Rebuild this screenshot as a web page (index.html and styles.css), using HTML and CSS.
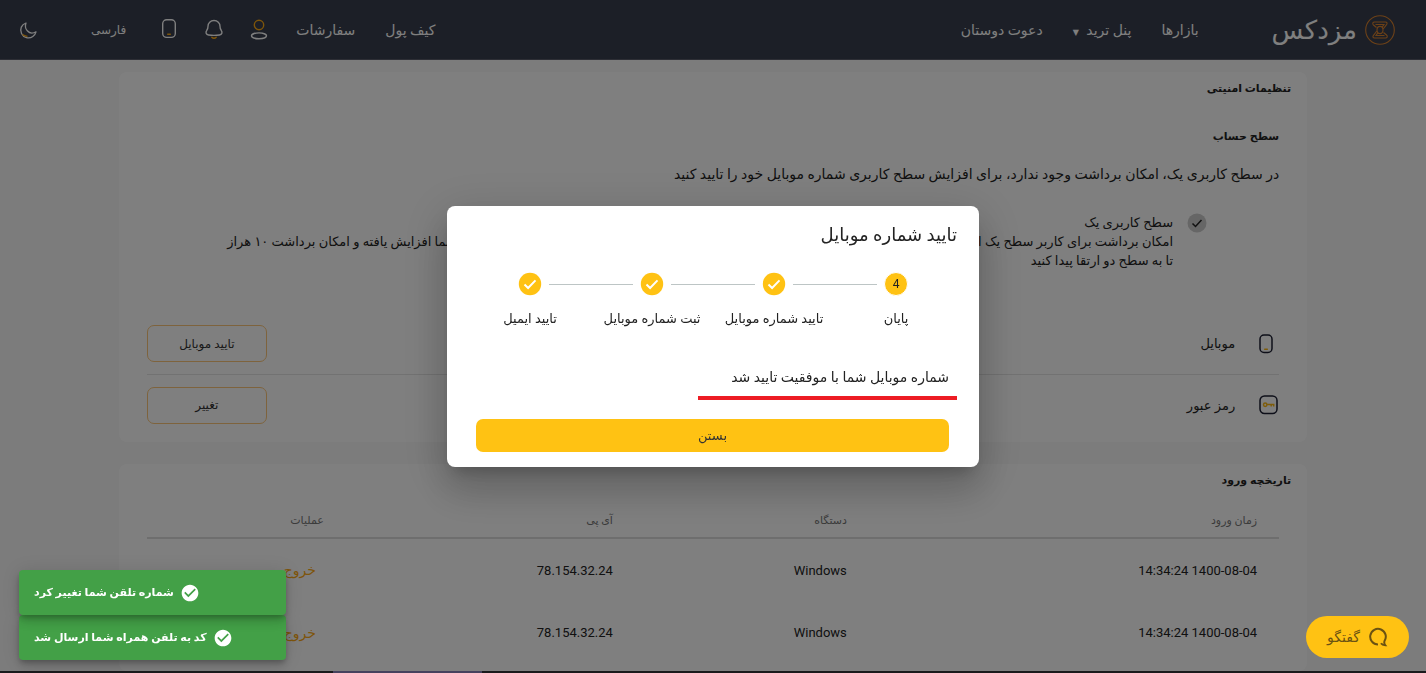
FILE: index.html
```html
<!DOCTYPE html>
<html lang="fa" dir="rtl">
<head>
  <meta charset="UTF-8">
  <meta name="viewport" content="width=device-width, initial-scale=1.0">
  <title>مزدکس - تنظیمات امنیتی</title>
  <link rel="stylesheet" href="styles.css">
</head>
<body>
  <header class="header">
    <a href="#" class="logo">
      <svg width="30" height="30" viewBox="0 0 30 30" fill="none" stroke="#d9822f" stroke-width="1.1">
        <circle cx="15" cy="15" r="14.3"/>
        <path d="M11.500 12.500L8.500 10C7 8.500 7.800 7 9.500 7h11c1.500 0 2 1.200 1.200 2.400L18.200 14M18.500 17.500l3 2.500c1.500 1.500.7 3-1 3h-11c-1.500 0-2-1.200-1.200-2.400L11.800 16"/>
        <path d="M10.500 9.500h8.500l-1.800 2.600M19.500 20.500H11l1.800-2.600"/>
        <ellipse cx="15" cy="15" rx="3" ry="3.600"/>
      </svg>
      <span class="logo-text">مزدکس</span>
    </a>
    <nav class="nav nav-main">
      <a href="#">بازارها</a>
      <a href="#">پنل ترید <span class="caret">▼</span></a>
      <a href="#">دعوت دوستان</a>
    </nav>
    <nav class="nav nav-user">
      <a href="#">کیف پول</a>
      <a href="#">سفارشات</a>
    </nav>
    <div class="tools">
      <button class="icon-btn" aria-label="حساب کاربری">
        <svg width="20" height="22" viewBox="0 0 20 22" fill="none" stroke="#fff" stroke-width="1.4">
          <circle cx="10" cy="6" r="4.700" stroke="#fdaa14"/>
          <ellipse cx="10" cy="16.800" rx="7.500" ry="2.900"/>
        </svg>
      </button>
      <button class="icon-btn" aria-label="اعلان‌ها">
        <svg width="20" height="22" viewBox="0 0 20 22" fill="none" stroke="#fff" stroke-width="1.4" stroke-linecap="round">
          <path d="M10 1.500c-3.500 0-6 2.500-6 5.700 0 2-.3 3-1.200 4.100-1.500 2-.8 4.400 1.700 4.700 3.600.5 7.400.5 11 0 2.500-.3 3.200-2.700 1.700-4.700-.9-1.100-1.200-2.100-1.200-4.100 0-3.200-2.500-5.700-6-5.700z"/>
          <path d="M7.800 18.200c1.200 1.300 3.200 1.300 4.400 0" stroke="#fdaa14"/>
        </svg>
      </button>
      <button class="icon-btn" aria-label="اپلیکیشن">
        <svg width="20" height="22" viewBox="0 0 20 22" fill="none" stroke="#fff" stroke-width="1.4" stroke-linecap="round">
          <rect x="3.700" y=".8" width="12.600" height="17.600" rx="4"/>
          <path d="M8.700 15.300h2.600" stroke="#fdaa14"/>
        </svg>
      </button>
    </div>
    <button class="lang">فارسی</button>
    <button class="icon-btn" aria-label="حالت شب">
      <svg width="20" height="20" viewBox="0 0 20 20" fill="none" stroke="#fff" stroke-width="1.3" stroke-linejoin="round">
        <path d="M8 3C3.500 4.500 1.500 9 3.500 13.500c2 4.300 7.500 5.800 11.300 3 1.700-1.200 2.700-2.700 3.200-4.700-3 1.800-6.500 1.500-8.700-1C7.300 8.800 7 5.800 8 3z"/>
        <path d="M4.500 14.500c1.500 1.200 3 1.300 5 1.800" stroke="#fdaa14"/>
      </svg>
    </button>
  </header>

  <main class="container">
    <section class="card">
      <h2 class="card-title">تنظیمات امنیتی</h2>
      <div class="card-body">
        <h3 class="level-title">سطح حساب</h3>
        <p class="level-desc">در سطح کاربری یک، امکان برداشت وجود ندارد، برای افزایش سطح کاربری شماره موبایل خود را تایید کنید</p>
        <div class="levels">
          <div class="level">
            <svg class="level-icon" width="20" height="20" viewBox="0 0 20 20" fill="none">
              <circle cx="10" cy="10" r="9.500" fill="#ccc"/>
              <path d="M5.500 10.500l3 3 6-6.500" stroke="#222" stroke-width="1.5"/>
            </svg>
            <p>سطح کاربری یک<br>امکان برداشت برای کاربر سطح یک امکان پذیر نیست<br>تا به سطح دو ارتقا پیدا کنید</p>
          </div>
          <div class="level">
            <svg class="level-icon" width="20" height="20" viewBox="0 0 20 20" fill="none">
              <circle cx="10" cy="10" r="9.500" fill="#ccc"/>
            </svg>
            <p>سطح کاربری دو<br>در این سطح سقف برداشت شما افزایش یافته و امکان برداشت ۱۰ هراز<br>تتر در هر روز را خواهید داشت</p>
          </div>
        </div>
        <div class="setting">
          <svg class="setting-icon" width="20" height="20" viewBox="0 0 20 20" fill="none" stroke="#1c1f33" stroke-width="1.5" stroke-linecap="round">
            <rect x="1" y="1" width="12" height="17.500" rx="4"/>
            <path d="M5.700 15.300h2.600" stroke="#fdb913"/>
          </svg>
          <span>موبایل</span>
          <button class="outline-btn">تایید موبایل</button>
        </div>
        <div class="setting">
          <svg class="setting-icon" width="20" height="20" viewBox="0 0 20 20" fill="none" stroke="#1c1f33" stroke-width="1.5">
            <rect x="1" y="1" width="17" height="17.500" rx="4.500"/>
            <circle cx="6.200" cy="9.700" r="1.700" stroke="#fdb913"/>
            <path d="M8 9.500h6.700v2M12.200 9.500v2" stroke="#fdb913"/>
          </svg>
          <span>رمز عبور</span>
          <button class="outline-btn">تغییر</button>
        </div>
      </div>
    </section>

    <section class="card">
      <h2 class="card-title">تاریخچه ورود</h2>
      <div class="card-body">
        <table class="history">
          <thead>
            <tr>
              <th>زمان ورود</th>
              <th class="col-device">دستگاه</th>
              <th class="col-ip">آی پی</th>
              <th class="col-action">عملیات</th>
            </tr>
          </thead>
          <tbody>
            <tr>
              <td><bdi dir="ltr">14:34:24 1400-08-04</bdi></td>
              <td>Windows</td>
              <td>78.154.32.24</td>
              <td><button class="exit-btn">خروج</button></td>
            </tr>
            <tr>
              <td><bdi dir="ltr">14:34:24 1400-08-04</bdi></td>
              <td>Windows</td>
              <td>78.154.32.24</td>
              <td><button class="exit-btn">خروج</button></td>
            </tr>
          </tbody>
        </table>
      </div>
    </section>
  </main>

  <div class="backdrop">
    <div class="modal" role="dialog" aria-labelledby="modalTitle">
      <h2 class="modal-title" id="modalTitle">تایید شماره موبایل</h2>
      <ol class="stepper">
        <li class="step">
          <div class="step-head">
            <svg width="24" height="24" viewBox="0 0 24 24"><circle cx="12" cy="12" r="11.200" fill="#ffc213"/><path d="M6.500 12.500l3.600 3.500 7.400-7.600" fill="none" stroke="#fff" stroke-width="2"/></svg>
          </div>
          <span>تایید ایمیل</span>
        </li>
        <li class="step">
          <div class="step-head">
            <svg width="24" height="24" viewBox="0 0 24 24"><circle cx="12" cy="12" r="11.200" fill="#ffc213"/><path d="M6.500 12.500l3.600 3.500 7.400-7.600" fill="none" stroke="#fff" stroke-width="2"/></svg>
          </div>
          <span>ثبت شماره موبایل</span>
        </li>
        <li class="step">
          <div class="step-head">
            <svg width="24" height="24" viewBox="0 0 24 24"><circle cx="12" cy="12" r="11.200" fill="#ffc213"/><path d="M6.500 12.500l3.600 3.500 7.400-7.600" fill="none" stroke="#fff" stroke-width="2"/></svg>
          </div>
          <span>تایید شماره موبایل</span>
        </li>
        <li class="step">
          <div class="step-head"><b class="step-number">4</b></div>
          <span>پایان</span>
        </li>
      </ol>
      <p class="modal-message">شماره موبایل شما با موفقیت تایید شد</p>
      <button class="close-btn">بستن</button>
    </div>
  </div>

  <div class="toasts">
    <div class="toast">
      <svg width="20" height="20" viewBox="0 0 24 24" fill="#fff"><path d="M12 2C6.500 2 2 6.500 2 12s4.500 10 10 10 10-4.500 10-10S17.500 2 12 2zm-2 15l-5-5 1.400-1.400L10 14.200l7.600-7.600L19 8l-9 9z"/></svg>
      <span>شماره تلقن شما تغییر کرد</span>
    </div>
    <div class="toast">
      <svg width="20" height="20" viewBox="0 0 24 24" fill="#fff"><path d="M12 2C6.500 2 2 6.500 2 12s4.500 10 10 10 10-4.500 10-10S17.500 2 12 2zm-2 15l-5-5 1.400-1.400L10 14.200l7.600-7.600L19 8l-9 9z"/></svg>
      <span>کد به تلفن همراه شما ارسال شد</span>
    </div>
  </div>

  <button class="chat-btn">
    <svg width="20" height="20" viewBox="0 0 20 20" fill="none" stroke="#6b5212" stroke-width="2">
      <path d="M10 17.500a7.800 7.800 0 1 1 6.500-3.500c-.5 1.500-.2 3 .8 4.300-2 0-3.500-.7-4.300-2"/>
    </svg>
    <span>گفتگو</span>
  </button>

  <div class="bottom-line"><span></span></div>
</body>
</html>
```

FILE: styles.css
```css
:root {
  --primary-color: #ffc213;
  --accent: #fdaa14;
  --header-bg: #383e4e;
  --bg-color: #f8f8f8;
  --text-color: #222;
  --light-text: #777;
}

* {
  box-sizing: border-box;
}

body {
  margin: 0;
  height: 100vh;
  overflow: hidden;
  font-family: Roboto, 'DejaVu Sans', sans-serif;
  font-size: 13px;
  background-color: var(--bg-color);
  color: var(--text-color);
}

button {
  font-family: inherit;
  cursor: pointer;
}

h2, h3, p {
  margin: 0;
}

/* Header */
.header {
  display: flex;
  align-items: center;
  height: 60px;
  padding: 0 31px 0 18px;
  background-color: var(--header-bg);
  border-bottom: 1px solid #5a5c6a;
  color: #fff;
}

.header a {
  color: inherit;
  text-decoration: none;
}

.logo {
  display: flex;
  align-items: center;
  gap: 8px;
}

.logo-text {
  font-size: 26px;
  line-height: 30px;
}

.nav {
  display: flex;
  gap: 30px;
  font-size: 14px;
}

.nav-main {
  margin-right: 73px;
}

.nav-user {
  margin-right: auto;
}

.caret {
  margin-right: 4px;
  font-size: 8px;
}

.tools {
  display: flex;
  gap: 25px;
  margin-right: 27px;
}

.icon-btn {
  display: flex;
  padding: 0;
  border: 0;
  background: none;
}

.lang {
  margin: 0 33px 0 53px;
  padding: 0;
  border: 0;
  background: none;
  color: #fff;
  font-size: 12px;
}

/* Cards */
.container {
  width: calc(100% / 12 * 10);
  margin: 0 auto;
  padding-top: 12px;
}

.card {
  margin-bottom: 22px;
  padding-top: 8px;
  border-radius: 8px;
  background-color: #fff;
}

.card-title {
  padding: 0 16px;
  font-size: 11px;
  line-height: 18px;
}

.card-body {
  padding: 0 28px 7px;
}

.level-title {
  margin-top: 30px;
  font-size: 11px;
  line-height: 18px;
}

.level-desc {
  margin-top: 18px;
  font-size: 14px;
  line-height: 20px;
}

.levels {
  display: flex;
  margin: 29px 0 43px;
}

.level {
  display: flex;
  flex: 1;
  gap: 14px;
  padding-right: 72px;
  white-space: nowrap;
}

.level p {
  line-height: 19px;
}

.setting {
  display: flex;
  align-items: center;
  height: 61px;
}

.setting + .setting {
  border-top: 1px solid #e4e4e4;
}

.setting span {
  margin-right: 24px;
}

.outline-btn {
  width: 120px;
  height: 37px;
  margin-right: auto;
  border: 1px solid #fdc77a;
  border-radius: 7px;
  background: none;
  color: #333;
  font-size: 12px;
}

/* Login history */
.history {
  width: 100%;
  border-collapse: collapse;
  table-layout: fixed;
}

.history th {
  height: 48px;
  padding: 14px 22px 0;
  border-bottom: 2px solid #dcdcdc;
  color: var(--light-text);
  font-size: 11px;
  font-weight: normal;
  text-align: right;
}

.history td {
  height: 63px;
  padding: 0 22px;
}

.col-device {
  width: 234px;
}

.col-ip {
  width: 289px;
}

.col-action {
  width: 199px;
}

.exit-btn {
  padding: 0 8px;
  border: 0;
  background: none;
  color: var(--accent);
  font-size: 14px;
}

/* Modal */
.backdrop {
  display: flex;
  align-items: center;
  justify-content: center;
  position: fixed;
  inset: 0;
  background-color: rgba(0, 0, 0, 0.5);
}

.modal {
  width: 532px;
  padding: 16px 22px 15px;
  border-radius: 8px;
  background-color: #fff;
  box-shadow: 0 11px 15px -7px rgba(0, 0, 0, 0.2), 0 24px 38px 3px rgba(0, 0, 0, 0.14), 0 9px 46px 8px rgba(0, 0, 0, 0.12);
}

.modal-title {
  font-size: 18px;
  font-weight: normal;
  line-height: 26px;
}

.stepper {
  display: flex;
  direction: ltr;
  margin: 24px 0 0;
  padding: 0;
  list-style: none;
}

.step {
  flex: 1;
  font-size: 13px;
  line-height: 18px;
  text-align: center;
  white-space: nowrap;
}

.step-head {
  display: flex;
  align-items: center;
  gap: 7px;
  margin-bottom: 14px;
}

.step-head::before,
.step-head::after {
  content: '';
  flex: 1;
  height: 1px;
  background-color: #bdc5c5;
}

.step:first-child .step-head::before,
.step:last-child .step-head::after {
  visibility: hidden;
}

.step-number {
  width: 24px;
  height: 24px;
  border: 1px solid #fff;
  border-radius: 50%;
  background-color: var(--primary-color);
  font-size: 12px;
  font-weight: normal;
  line-height: 22px;
}

.modal-message {
  width: 259px;
  margin: 38px 0 19px;
  padding: 0 8px 8px 0;
  border-bottom: 4px solid #ed1c24;
  font-size: 14px;
  line-height: 22px;
  white-space: nowrap;
}

.close-btn {
  display: block;
  width: calc(100% - 15px);
  height: 33px;
  margin-right: 8px;
  border: 0;
  border-radius: 7px;
  background-color: var(--primary-color);
  color: #333;
  font-size: 13px;
}

/* Notifications */
.toasts {
  position: fixed;
  bottom: 13px;
  left: 19px;
  width: 267px;
}

.toast {
  display: flex;
  align-items: center;
  justify-content: flex-end;
  gap: 6px;
  position: relative;
  height: 45px;
  padding: 0 15px;
  border-radius: 4px;
  background-color: #43a047;
  box-shadow: 0 3px 5px -1px rgba(0, 0, 0, 0.2), 0 6px 10px rgba(0, 0, 0, 0.14), 0 1px 18px rgba(0, 0, 0, 0.12);
  color: #fff;
  font-size: 11px;
  font-weight: bold;
  white-space: nowrap;
}

.toast:first-child {
  z-index: 1;
}

.chat-btn {
  display: flex;
  align-items: center;
  justify-content: center;
  gap: 8px;
  position: fixed;
  right: 17px;
  bottom: 15px;
  width: 103px;
  height: 42px;
  border: 0;
  border-radius: 21px;
  background-color: var(--primary-color);
  color: #6b5212;
  font-size: 14px;
}

.bottom-line {
  position: fixed;
  right: 0;
  bottom: 0;
  left: 0;
  height: 2px;
  padding-left: 333px;
  background-color: #1a1a1c;
  direction: ltr;
}

.bottom-line span {
  display: block;
  width: 149px;
  height: 2px;
  background-color: #46425e;
}
```
